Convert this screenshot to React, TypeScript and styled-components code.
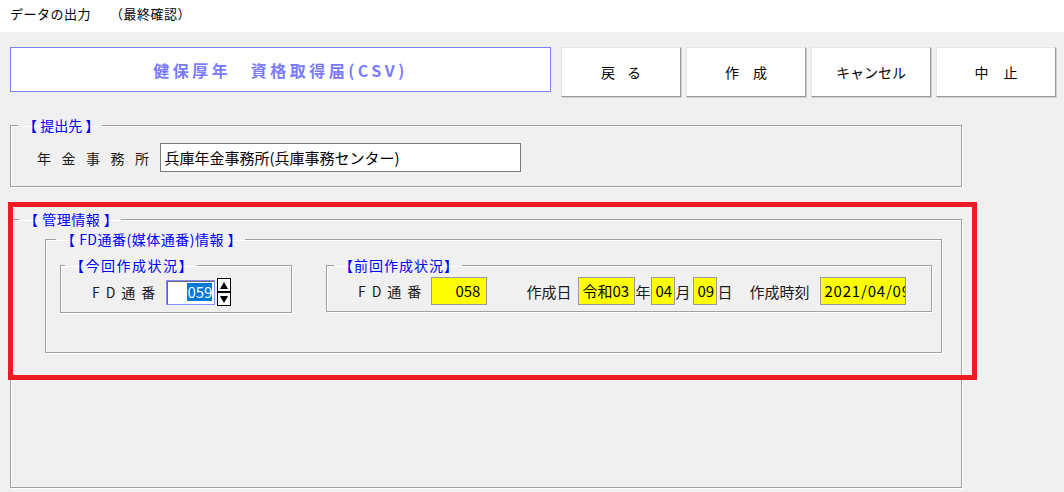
import React from "react";
import styled, { createGlobalStyle } from "styled-components";

const GlobalStyle = createGlobalStyle`
  html, body {
    margin: 0;
    padding: 0;
    background: #f0f0f0;
  }
  body {
    font-family: "Noto Sans CJK JP", "Noto Sans", sans-serif;
    color: #000;
    text-spacing-trim: space-all;
  }
`;

const Page = styled.div`
  position: relative;
  width: 1064px;
  height: 492px;
  overflow: hidden;
  background: #f0f0f0;
`;

const Caption = styled.div`
  height: 32px;
  background: #fff;
  padding-left: 10px;
  font-size: 13px;
  letter-spacing: 0.5px;
  line-height: 28px;
  white-space: pre;
`;

const CaptionNote = styled.span`
  margin-left: 19px;
`;

const Body = styled.div`
  padding: 15px 0 0 10px;
`;

const Toolbar = styled.div`
  display: flex;
  align-items: flex-start;
`;

const TitleBox = styled.div`
  width: 541px;
  height: 45px;
  box-sizing: border-box;
  border: 1px solid #8080ff;
  background: #fff;
  display: flex;
  align-items: center;
  justify-content: center;
  color: #7b7bff;
  font-weight: bold;
  font-size: 16px;
  letter-spacing: 3.5px;
  white-space: pre;
  margin-right: 10px;
`;

const Buttons = styled.div`
  display: flex;
  gap: 5px;
`;

const Button = styled.button<{ $ls?: number }>`
  width: 120px;
  height: 50px;
  background: #fff;
  border: 1px solid #e6e6e6;
  border-right-color: #9a9a9a;
  border-bottom-color: #9a9a9a;
  box-shadow: 1px 1px 0 #d0d0d0;
  font-family: inherit;
  font-size: 14px;
  letter-spacing: ${(p) => p.$ls ?? 0}px;
  text-indent: ${(p) => p.$ls ?? 0}px;
  color: #000;
  white-space: pre;
  padding: 0;
`;

const Group = styled.fieldset<{ $w?: number; $h?: number }>`
  margin: 0;
  padding: 0;
  min-width: 0;
  border: 1px solid #a0a0a0;
  box-shadow: inset 1px 1px 0 #fff, 1px 1px 0 #fff;
  ${(p) => (p.$w ? `width: ${p.$w}px;` : "")}
  ${(p) => (p.$h ? `height: ${p.$h}px;` : "")}
  box-sizing: border-box;
`;

const Legend = styled.legend<{ $indent: number; $ls?: number }>`
  margin-left: ${(p) => p.$indent}px;
  padding: 0 3px 0 5px;
  color: #0000ff;
  font-size: 14px;
  letter-spacing: ${(p) => p.$ls ?? 0}px;
  line-height: 16px;
  white-space: pre;
`;

const Inner = styled.div<{ $pad: string }>`
  padding: ${(p) => p.$pad};
`;

const Row = styled.div<{ $pad: string }>`
  display: flex;
  align-items: center;
  padding: ${(p) => p.$pad};
`;

const SpacedLabel = styled.span<{ $ls: number }>`
  font-size: 14px;
  letter-spacing: ${(p) => p.$ls}px;
  color: #1a1a1a;
  white-space: nowrap;
`;

const Label = styled.span<{ $ml?: number }>`
  font-size: 15px;
  color: #1a1a1a;
  margin-left: ${(p) => p.$ml ?? 0}px;
  white-space: nowrap;
`;

const TextBox = styled.div`
  width: 361px;
  height: 29px;
  box-sizing: border-box;
  background: #fff;
  border: 1px solid #7a7a7a;
  font-size: 15px;
  line-height: 27px;
  padding-left: 4px;
  white-space: nowrap;
`;

const YellowBox = styled.div<{ $w: number; $ml: number; $right?: boolean; $ls?: number }>`
  width: ${(p) => p.$w}px;
  height: 28px;
  margin-left: ${(p) => p.$ml}px;
  box-sizing: border-box;
  background: #ffff00;
  border: 1px solid #9a9a9a;
  font-size: 15px;
  letter-spacing: ${(p) => p.$ls ?? 0}px;
  line-height: 26px;
  padding: 0 ${(p) => (p.$right ? "6px" : "0")} 0 ${(p) => (p.$right ? "0" : "3px")};
  text-align: ${(p) => (p.$right ? "right" : "left")};
  overflow: hidden;
  white-space: nowrap;
`;

const GroupRow = styled.div`
  display: flex;
  align-items: flex-start;
  gap: 34px;
`;

const Spin = styled.div`
  display: flex;
  align-items: center;
  margin-left: 5px;
`;

const SpinField = styled.div`
  width: 49px;
  height: 25px;
  box-sizing: border-box;
  border: 1px solid #8a8aff;
  box-shadow: inset 1px 1px 0 #6a6a6a;
  background: #fff;
  display: flex;
  align-items: center;
  justify-content: flex-end;
  padding-right: 2px;
`;

const Selected = styled.span`
  background: #0078d7;
  color: #fff;
  font-size: 15px;
  line-height: 18px;
`;

const SpinButtons = styled.div`
  display: flex;
  flex-direction: column;
  margin-left: 2px;
`;

const SpinButton = styled.div`
  width: 14px;
  height: 14px;
  box-sizing: border-box;
  border: 1px solid #000;
  background: #fff;
  display: flex;
  align-items: center;
  justify-content: center;
`;

const Highlight = styled.div`
  position: absolute;
  left: 8px;
  top: 202px;
  width: 969px;
  height: 178px;
  box-sizing: border-box;
  border: 5px solid #ed1c24;
  pointer-events: none;
`;

const Spacer = styled.div<{ $h: number }>`
  height: ${(p) => p.$h}px;
`;

const Arrow = ({ up }: { up?: boolean }) => (
  <svg width="8" height="7" viewBox="0 0 8 7">
    <polygon points={up ? "4,0 8,7 0,7" : "0,0 8,0 4,7"} fill="#000" />
  </svg>
);

export default function App() {
  return (
    <Page>
      <GlobalStyle />
      <Caption>
        データの出力<CaptionNote>（最終確認）</CaptionNote>
      </Caption>
      <Body>
        <Toolbar>
          <TitleBox>{"健保厚年　資格取得届(CSV)"}</TitleBox>
          <Buttons>
            <Button $ls={12}>戻る</Button>
            <Button $ls={14}>作成</Button>
            <Button>キャンセル</Button>
            <Button $ls={15}>中止</Button>
          </Buttons>
        </Toolbar>

        <Spacer $h={20} />

        <Group $w={952}>
          <Legend $indent={7}>{"【 提出先 】"}</Legend>
          <Row $pad="10px 0 14px 26px">
            <SpacedLabel $ls={10.5}>年金事務所</SpacedLabel>
            <TextBox>兵庫年金事務所(兵庫事務センター)</TextBox>
          </Row>
        </Group>

        <Spacer $h={24} />

        <Group $w={952} $h={277}>
          <Legend $indent={8} $ls={0.5}>{"【 管理情報 】"}</Legend>
          <Inner $pad="4px 19px 0 34px">
            <Group>
              <Legend $indent={10} $ls={0.5}>{"【 FD通番(媒体通番)情報 】"}</Legend>
              <Inner $pad="10px 9px 39px 14px">
                <GroupRow>
                  <Group $w={232}>
                    <Legend $indent={4} $ls={1.5}>【今回作成状況】</Legend>
                    <Row $pad="5px 0 6px 31px">
                      <SpacedLabel $ls={6}>FD通番</SpacedLabel>
                      <Spin>
                        <SpinField>
                          <Selected>059</Selected>
                        </SpinField>
                        <SpinButtons>
                          <SpinButton>
                            <Arrow up />
                          </SpinButton>
                          <SpinButton>
                            <Arrow />
                          </SpinButton>
                        </SpinButtons>
                      </Spin>
                    </Row>
                  </Group>
                  <Group style={{ flex: 1 }}>
                    <Legend $indent={7} $ls={1}>【前回作成状況】</Legend>
                    <Row $pad="4px 0 6px 31px">
                      <SpacedLabel $ls={6}>FD通番</SpacedLabel>
                      <YellowBox $w={56} $ml={4} $right>
                        058
                      </YellowBox>
                      <Label $ml={39}>作成日</Label>
                      <YellowBox $w={57} $ml={7}>
                        令和03
                      </YellowBox>
                      <Label>年</Label>
                      <YellowBox $w={24} $ml={1}>
                        04
                      </YellowBox>
                      <Label>月</Label>
                      <YellowBox $w={24} $ml={3}>
                        09
                      </YellowBox>
                      <Label>日</Label>
                      <Label $ml={17}>作成時刻</Label>
                      <YellowBox $w={86} $ml={11} $ls={0.8}>
                        2021/04/09 10:15
                      </YellowBox>
                    </Row>
                  </Group>
                </GroupRow>
              </Inner>
            </Group>
          </Inner>
        </Group>
      </Body>
      <Highlight />
    </Page>
  );
}
